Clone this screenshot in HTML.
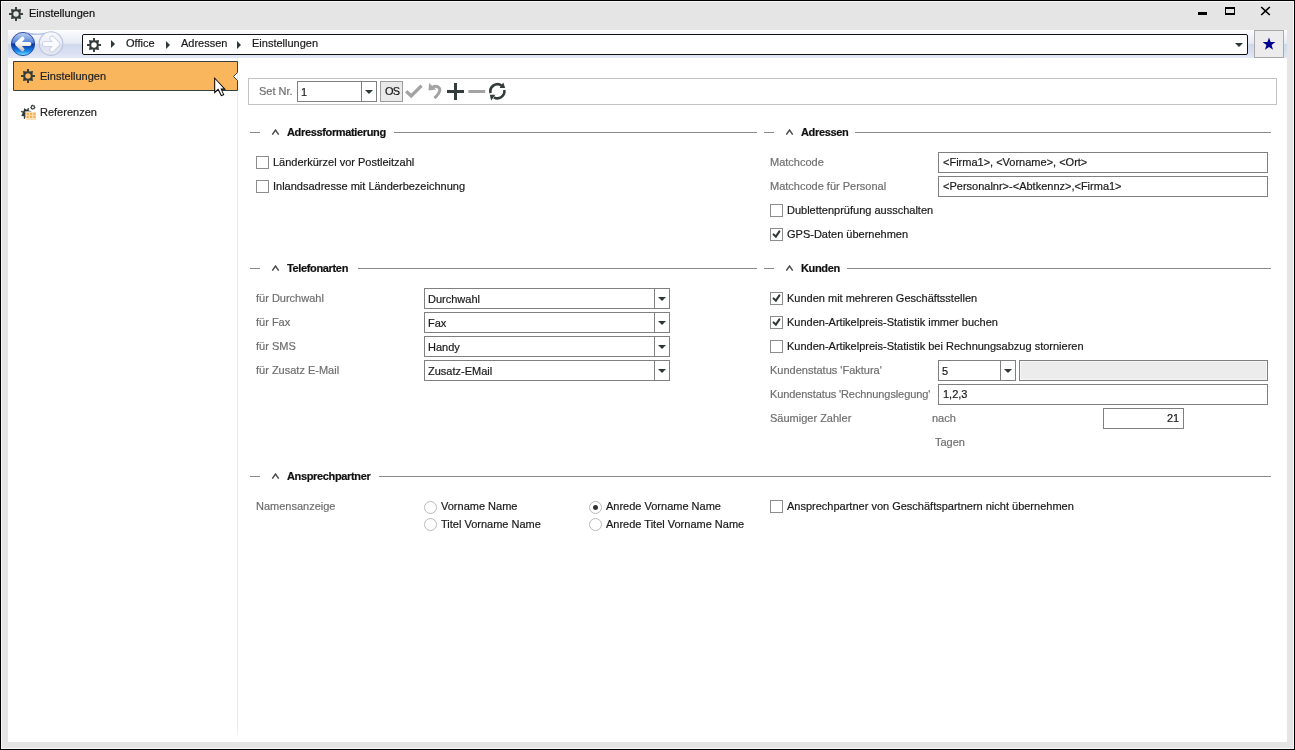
<!DOCTYPE html>
<html><head><meta charset="utf-8">
<style>
*{box-sizing:border-box;margin:0;padding:0}
html,body{width:1295px;height:750px;overflow:hidden;background:#000}
body{font-family:"Liberation Sans",sans-serif;font-size:11px;color:#1a1a1a;position:relative;-webkit-font-smoothing:antialiased}
.a{position:absolute}
.t{position:absolute;white-space:nowrap;line-height:14px;height:14px;will-change:transform;-webkit-text-stroke:0.2px currentColor}
.lbl{color:#6f6f6f}
.b{font-weight:bold;letter-spacing:-0.35px;color:#111}
.hl{position:absolute;height:1px;background:#8a8a8a}
.cb{position:absolute;width:13px;height:13px;border:1px solid #8c8c8c;background:#fff}
.inp{position:absolute;height:21px;border:1px solid #7f7f7f;background:#fff}
.cmb{position:absolute;height:21px;border:1px solid #7f7f7f;background:#fff}
.cmb .sep{position:absolute;top:0;bottom:0;width:1px;background:#7f7f7f}
.arr{position:absolute;width:0;height:0;border-left:4px solid transparent;border-right:4px solid transparent;border-top:4px solid #2f3838}
.rd{position:absolute;width:13px;height:13px;border:1px solid #bababa;border-radius:50%;background:#fff}
</style></head><body>
<svg width="0" height="0" style="position:absolute"><defs>
 <mask id="gm"><rect x="-8" y="-8" width="16" height="16" fill="#fff"/><circle r="2.75" fill="#000"/></mask>
 <g id="gear" mask="url(#gm)">
  <rect x="-0.95" y="-7" width="1.9" height="14"/>
  <rect x="-7" y="-0.95" width="14" height="1.9"/>
  <polygon points="4.30,0.00 4.95,4.95 0.00,4.30 -4.95,4.95 -4.30,0.00 -4.95,-4.95 -0.00,-4.30 4.95,-4.95"/>
  <circle r="4.4"/>
 </g>
</defs></svg>
<!-- window frame -->
<div class="a" style="left:1px;top:1px;width:1293px;height:748px;background:#f7f7f7"></div>
<div class="a" style="left:2px;top:2px;width:1291px;height:746px;background:#e5e5e5"></div>
<!-- title -->
<svg class="a" style="left:8px;top:6px" width="16" height="16" viewBox="-8 -8 16 16"><use href="#gear" fill="#333b3b"/></svg>
<div class="t" style="left:29px;top:6px;color:#111">Einstellungen</div>
<!-- window buttons -->
<div class="a" style="left:1198px;top:12px;width:9px;height:3px;background:#000"></div>
<div class="a" style="left:1225px;top:7px;width:10px;height:8px;border:2px solid #000;border-left-width:1.5px;border-right-width:1.5px"></div>
<svg class="a" style="left:1260px;top:6px" width="11" height="10" viewBox="0 0 11 10"><path d="M1.2 1 L9.8 9 M9.8 1 L1.2 9" stroke="#000" stroke-width="1.7"/></svg>

<!-- content area -->
<div class="a" style="left:8px;top:30px;width:1279px;height:712px;background:#fff"></div>
<!-- nav bar -->
<div class="a" style="left:8px;top:30px;width:1279px;height:28px;background:linear-gradient(#fcfdfe 0%,#f3f5fa 20%,#e6eaf4 48%,#cfd9ec 50%,#d8dff1 80%,#e4e9f7 100%)"></div>
<!-- back / forward -->
<svg class="a" style="left:10px;top:31px" width="56" height="26" viewBox="0 0 56 26">
 <defs>
  <linearGradient id="bk" x1="0" y1="0" x2="0" y2="1">
   <stop offset="0" stop-color="#c2d2f0"/><stop offset="0.45" stop-color="#4f80d8"/><stop offset="0.5" stop-color="#0b2d98"/><stop offset="0.8" stop-color="#1784ea"/><stop offset="1" stop-color="#7ef0ff"/>
  </linearGradient>
  <linearGradient id="fw" x1="0" y1="0" x2="0" y2="1">
   <stop offset="0" stop-color="#f6f8fc"/><stop offset="0.5" stop-color="#eceff7"/><stop offset="0.52" stop-color="#dce1ee"/><stop offset="1" stop-color="#e6e9f3"/>
  </linearGradient>
  <linearGradient id="aw" x1="0" y1="0" x2="0" y2="1">
   <stop offset="0" stop-color="#ffffff"/><stop offset="0.55" stop-color="#f4f2ee"/><stop offset="1" stop-color="#cfc8bd"/>
  </linearGradient>
 </defs>
 <path d="M18 2.2 Q28 4.5 36 2.2" stroke="#b4c2e6" stroke-width="1.4" fill="none"/>
 <circle cx="13" cy="13" r="11.6" fill="url(#bk)" stroke="#1f3f9c" stroke-width="0.9"/>
 <path d="M12.5 7.6 L7 13 L12.5 18.4 M7.5 13 L19.4 13" stroke="url(#aw)" stroke-width="3.9" stroke-linecap="round" stroke-linejoin="round" fill="none"/>
 <circle cx="41" cy="12.6" r="11.8" fill="url(#fw)" stroke="#bcc4de" stroke-width="1.1"/>
 <path d="M42 7.4 L47.6 13 L42 18.6 M47 13 L34.6 13" stroke="#c9cfe2" stroke-width="5.4" stroke-linecap="round" stroke-linejoin="round" fill="none"/>
 <path d="M42 7.4 L47.6 13 L42 18.6 M47 13 L34.6 13" stroke="#fafbfd" stroke-width="3.8" stroke-linecap="round" stroke-linejoin="round" fill="none"/>
</svg>
<!-- breadcrumb -->
<div class="a" style="left:82px;top:34px;width:1166px;height:21px;border:1.5px solid #111;border-radius:2px;background:#fff"></div>
<svg class="a" style="left:86px;top:37px" width="16" height="16" viewBox="-8 -8 16 16"><use href="#gear" fill="#333b3b"/></svg>
<div class="a" style="left:111px;top:40px;width:0;height:0;border-top:4px solid transparent;border-bottom:4px solid transparent;border-left:4px solid #2f3838"></div>
<div class="t" style="left:126px;top:36px">Office</div>
<div class="a" style="left:166px;top:41px;width:0;height:0;border-top:4px solid transparent;border-bottom:4px solid transparent;border-left:4px solid #2f3838"></div>
<div class="t" style="left:181px;top:36px">Adressen</div>
<div class="a" style="left:237px;top:41px;width:0;height:0;border-top:4px solid transparent;border-bottom:4px solid transparent;border-left:4px solid #2f3838"></div>
<div class="t" style="left:252px;top:36px">Einstellungen</div>
<div class="arr" style="left:1235px;top:43px"></div>
<!-- star button -->
<div class="a" style="left:1254px;top:30px;width:30px;height:28px;border:1px solid #a9a9a9;background:#ececec"></div>
<svg class="a" style="left:1262px;top:37px" width="14" height="14" viewBox="0 0 14 14"><path d="M7 0.5 L8.6 5 L13.4 5.1 L9.6 8 L11 12.7 L7 9.9 L3 12.7 L4.4 8 L0.6 5.1 L5.4 5 Z" fill="#000090"/></svg>

<!-- left nav -->
<div class="a" style="left:237px;top:58px;width:1px;height:681px;background:linear-gradient(#ebebeb 0%,#ebebeb 98.4%,#ffffff 100%)"></div>
<svg class="a" style="left:13px;top:61px" width="226" height="31" viewBox="0 0 226 31">
 <path d="M0.5 0.5 H224.5 V11.5 L220.5 15.5 L224.5 19.5 V29.5 H0.5 Z" fill="#f9b65c" stroke="#3a3f40" stroke-width="1"/>
</svg>
<svg class="a" style="left:20px;top:68px" width="16" height="16" viewBox="-8 -8 16 16"><use href="#gear" fill="#333b3b"/></svg>
<div class="t" style="left:40px;top:69px;color:#222">Einstellungen</div>
<!-- referenzen icon -->
<svg class="a" style="left:19px;top:103px" width="18" height="18" viewBox="0 0 18 18">
 <g transform="translate(7.4 10.5) scale(0.8) rotate(22.5)"><use href="#gear" fill="#2f3636"/><circle r="3" fill="#2f3636"/></g>
 <rect x="6.4" y="8.4" width="11" height="9.6" fill="#fff"/>
 <rect x="7" y="9" width="10" height="8" fill="#fbe2bf"/>
 <g fill="#f4b253">
  <rect x="7.6" y="9.8" width="2.2" height="2.2"/><rect x="11" y="9.8" width="2.2" height="2.2"/><rect x="14.4" y="9.8" width="2.2" height="2.2"/>
  <rect x="7.6" y="12.8" width="2.2" height="2.2"/><rect x="11" y="12.8" width="2.2" height="2.2"/><rect x="14.4" y="12.8" width="2.2" height="2.2"/>
 </g>
 <g transform="translate(13.8 4.3) scale(0.4)"><use href="#gear" fill="#2f3636"/></g>
</svg>
<div class="t" style="left:40px;top:105px;color:#222">Referenzen</div>
<!-- cursor -->
<svg class="a" style="left:213px;top:76px" width="14" height="21" viewBox="0 0 14 21">
 <path d="M1.2 0.9 L1.2 17.7 L5 14.3 L8.1 20.3 L11.4 19 L8.9 13.7 L13 13.7 Z" fill="#000"/>
 <path d="M2.2 3.3 L2.2 15.3 L5.3 12.5 L8.6 18.9 L10.1 18.3 L7.4 12.6 L10.6 12.6 Z" fill="#fff"/>
</svg>

<!-- toolbar -->
<div class="a" style="left:248px;top:78px;width:1029px;height:27px;border:1px solid #c3c3c3"></div>
<div class="t lbl" style="left:259px;top:84px">Set Nr.</div>
<div class="cmb" style="left:297px;top:81px;width:80px"><div class="sep" style="left:63px"></div></div>
<div class="t" style="left:301px;top:85px">1</div>
<div class="arr" style="left:365px;top:90px"></div>
<div class="a" style="left:380px;top:81px;width:23px;height:21px;border:1px solid #9c9c9c;background:#eaeaea"></div>
<div class="t" style="left:385px;top:84px;letter-spacing:-0.8px">OS</div>
<svg class="a" style="left:404px;top:82px" width="104" height="20" viewBox="0 0 104 20">
 <path d="M2.2 9.2 L7.2 14 L17.6 3.6" stroke="#a3a3a3" stroke-width="3.3" fill="none" stroke-linejoin="miter"/>
 <path d="M25 1 L24.5 8.6 L32.2 7.6 Z" fill="#a3a3a3"/>
 <path d="M28.8 4.8 C 33 3.4, 36.4 5.4, 35.7 8.8 C 35.2 11.6, 32.8 14, 30.4 16.2" stroke="#a3a3a3" stroke-width="3" fill="none"/>
 <rect x="43" y="8" width="17" height="3" fill="#333b3b"/>
 <rect x="50" y="1" width="3" height="17" fill="#333b3b"/>
 <rect x="64.4" y="8" width="16.8" height="3" fill="#a3a3a3"/>
 <path d="M86.64 11.11 A7 7 0 0 1 97.9 3.9" stroke="#333b3b" stroke-width="2.6" fill="none"/>
 <path d="M99.3 0.5 L101.2 6 L95.6 6 Z" fill="#333b3b"/>
 <path d="M100.29 8.08 A7 7 0 0 1 89.9 15.36" stroke="#333b3b" stroke-width="2.6" fill="none"/>
 <path d="M85.8 12.8 L91.3 12.8 L87.2 18.4 Z" fill="#333b3b"/>
</svg>

<!-- Section: Adressformatierung -->
<div class="hl" style="left:250px;top:132px;width:10px"></div>
<svg class="a" style="left:271px;top:129px" width="9" height="7" viewBox="0 0 9 7"><path d="M1.3 5.6 L4.5 1 L7.7 5.6" stroke="#4a4a4a" stroke-width="1.45" fill="none"/></svg>
<div class="t b" style="left:287px;top:125px">Adressformatierung</div>
<div class="hl" style="left:394px;top:132px;width:363px"></div>
<div class="cb" style="left:256px;top:156px"></div>
<div class="t" style="left:273px;top:155px">Länderkürzel vor Postleitzahl</div>
<div class="cb" style="left:256px;top:180px"></div>
<div class="t" style="left:273px;top:179px">Inlandsadresse mit Länderbezeichnung</div>

<!-- Section: Adressen -->
<div class="hl" style="left:764px;top:132px;width:10px"></div>
<svg class="a" style="left:785px;top:129px" width="9" height="7" viewBox="0 0 9 7"><path d="M1.3 5.6 L4.5 1 L7.7 5.6" stroke="#4a4a4a" stroke-width="1.45" fill="none"/></svg>
<div class="t b" style="left:801px;top:125px">Adressen</div>
<div class="hl" style="left:855px;top:132px;width:416px"></div>
<div class="t lbl" style="left:770px;top:155px">Matchcode</div>
<div class="inp" style="left:938px;top:152px;width:330px"></div>
<div class="t" style="left:943px;top:155px">&lt;Firma1&gt;, &lt;Vorname&gt;, &lt;Ort&gt;</div>
<div class="t lbl" style="left:770px;top:179px">Matchcode für Personal</div>
<div class="inp" style="left:938px;top:176px;width:330px"></div>
<div class="t" style="left:943px;top:179px">&lt;Personalnr&gt;-&lt;Abtkennz&gt;,&lt;Firma1&gt;</div>
<div class="cb" style="left:770px;top:204px"></div>
<div class="t" style="left:787px;top:203px">Dublettenprüfung ausschalten</div>
<div class="cb" style="left:770px;top:228px"></div>
<svg class="a" style="left:770px;top:228px" width="13" height="13" viewBox="0 0 13 13"><path d="M3.6 6.4 L5.9 8.7 L9.4 3.4" stroke="#333b3b" stroke-width="2.1" stroke-linecap="round" fill="none"/></svg>
<div class="t" style="left:787px;top:227px">GPS-Daten übernehmen</div>

<!-- Section: Telefonarten -->
<div class="hl" style="left:250px;top:268px;width:10px"></div>
<svg class="a" style="left:271px;top:265px" width="9" height="7" viewBox="0 0 9 7"><path d="M1.3 5.6 L4.5 1 L7.7 5.6" stroke="#4a4a4a" stroke-width="1.45" fill="none"/></svg>
<div class="t b" style="left:287px;top:261px">Telefonarten</div>
<div class="hl" style="left:358px;top:268px;width:399px"></div>
<div class="t lbl" style="left:256px;top:291px">für Durchwahl</div>
<div class="cmb" style="left:424px;top:288px;width:246px"><div class="sep" style="left:229px"></div></div>
<div class="arr" style="left:658px;top:297px"></div>
<div class="t" style="left:428px;top:292px">Durchwahl</div>
<div class="t lbl" style="left:256px;top:315px">für Fax</div>
<div class="cmb" style="left:424px;top:312px;width:246px"><div class="sep" style="left:229px"></div></div>
<div class="arr" style="left:658px;top:321px"></div>
<div class="t" style="left:428px;top:316px">Fax</div>
<div class="t lbl" style="left:256px;top:339px">für SMS</div>
<div class="cmb" style="left:424px;top:336px;width:246px"><div class="sep" style="left:229px"></div></div>
<div class="arr" style="left:658px;top:345px"></div>
<div class="t" style="left:428px;top:340px">Handy</div>
<div class="t lbl" style="left:256px;top:363px">für Zusatz E-Mail</div>
<div class="cmb" style="left:424px;top:360px;width:246px"><div class="sep" style="left:229px"></div></div>
<div class="arr" style="left:658px;top:369px"></div>
<div class="t" style="left:428px;top:364px">Zusatz-EMail</div>

<!-- Section: Kunden -->
<div class="hl" style="left:764px;top:268px;width:10px"></div>
<svg class="a" style="left:785px;top:265px" width="9" height="7" viewBox="0 0 9 7"><path d="M1.3 5.6 L4.5 1 L7.7 5.6" stroke="#4a4a4a" stroke-width="1.45" fill="none"/></svg>
<div class="t b" style="left:801px;top:261px">Kunden</div>
<div class="hl" style="left:847px;top:268px;width:424px"></div>
<div class="cb" style="left:770px;top:292px"></div>
<svg class="a" style="left:770px;top:292px" width="13" height="13" viewBox="0 0 13 13"><path d="M3.6 6.4 L5.9 8.7 L9.4 3.4" stroke="#333b3b" stroke-width="2.1" stroke-linecap="round" fill="none"/></svg>
<div class="t" style="left:787px;top:291px">Kunden mit mehreren Geschäftsstellen</div>
<div class="cb" style="left:770px;top:316px"></div>
<svg class="a" style="left:770px;top:316px" width="13" height="13" viewBox="0 0 13 13"><path d="M3.6 6.4 L5.9 8.7 L9.4 3.4" stroke="#333b3b" stroke-width="2.1" stroke-linecap="round" fill="none"/></svg>
<div class="t" style="left:787px;top:315px">Kunden-Artikelpreis-Statistik immer buchen</div>
<div class="cb" style="left:770px;top:340px"></div>
<div class="t" style="left:787px;top:339px">Kunden-Artikelpreis-Statistik bei Rechnungsabzug stornieren</div>
<div class="t lbl" style="left:770px;top:363px">Kundenstatus 'Faktura'</div>
<div class="cmb" style="left:938px;top:360px;width:78px"><div class="sep" style="left:61px"></div></div>
<div class="arr" style="left:1004px;top:369px"></div>
<div class="t" style="left:942px;top:364px">5</div>
<div class="inp" style="left:1019px;top:360px;width:249px;background:#ececec;box-shadow:inset 0 0 0 1px #f6f6f6"></div>
<div class="t lbl" style="left:770px;top:387px;letter-spacing:-0.1px">Kundenstatus 'Rechnungslegung'</div>
<div class="inp" style="left:938px;top:384px;width:330px"></div>
<div class="t" style="left:943px;top:387px">1,2,3</div>
<div class="t lbl" style="left:770px;top:411px">Säumiger Zahler</div>
<div class="t lbl" style="left:932px;top:411px">nach</div>
<div class="inp" style="left:1103px;top:408px;width:81px"></div>
<div class="t" style="left:1167px;top:411px">21</div>
<div class="t lbl" style="left:935px;top:435px">Tagen</div>

<!-- Section: Ansprechpartner -->
<div class="hl" style="left:250px;top:476px;width:10px"></div>
<svg class="a" style="left:271px;top:473px" width="9" height="7" viewBox="0 0 9 7"><path d="M1.3 5.6 L4.5 1 L7.7 5.6" stroke="#4a4a4a" stroke-width="1.45" fill="none"/></svg>
<div class="t b" style="left:287px;top:469px">Ansprechpartner</div>
<div class="hl" style="left:379px;top:476px;width:892px"></div>
<div class="t lbl" style="left:256px;top:499px">Namensanzeige</div>
<div class="rd" style="left:424px;top:501px"></div>
<div class="t" style="left:441px;top:499px">Vorname Name</div>
<div class="rd" style="left:424px;top:518px"></div>
<div class="t" style="left:441px;top:517px">Titel Vorname Name</div>
<div class="rd" style="left:589px;top:501px"></div>
<div class="a" style="left:593px;top:505px;width:5px;height:5px;border-radius:50%;background:#333"></div>
<div class="t" style="left:606px;top:499px">Anrede Vorname Name</div>
<div class="rd" style="left:589px;top:518px"></div>
<div class="t" style="left:606px;top:517px">Anrede Titel Vorname Name</div>
<div class="cb" style="left:770px;top:500px"></div>
<div class="t" style="left:787px;top:499px">Ansprechpartner von Geschäftspartnern nicht übernehmen</div>
</body></html>
